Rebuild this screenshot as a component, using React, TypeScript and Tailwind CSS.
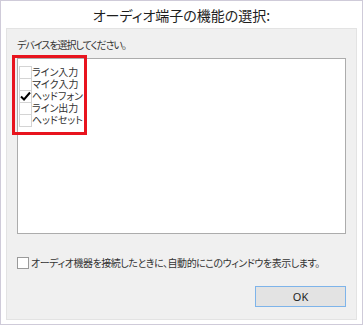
import React from "react";

const items = [
  { label: "ライン入力", checked: false },
  { label: "マイク入力", checked: false },
  { label: "ヘッドフォン", checked: true },
  { label: "ライン出力", checked: false },
  { label: "ヘッドセット", checked: false },
];

const font = "font-['Noto_Sans_CJK_JP','Noto_Sans',sans-serif] [font-feature-settings:'palt']";

const App: React.FC = () => {
  return (
    <div className={`w-[363px] h-[325px] bg-white border border-[#cfcbd9] flex flex-col ${font} text-[#1e1e1e]`}>
      <div className="h-[27px] flex items-center justify-center text-[14px] leading-none">
        オーディオ端子の機能の選択:
      </div>
      <div className="mx-[5px] mb-[4px] flex-1 bg-[#f0f0f0] border border-[#e3e3e3] px-[10px] flex flex-col">
        <p className="mt-[10px] text-[10px] leading-[12px] tracking-[-1px] text-[#333]">デバイスを選択してください。</p>
        <div className="relative mt-[7px] h-[176px] bg-white border border-[#acacac] pt-[7px]">
          {items.map((item) => (
            <div key={item.label} className="h-[12px] flex items-center">
              <div className="ml-[1px] w-[13px] h-[13px] border border-[#d4d4d4] bg-white flex items-center justify-center">
                {item.checked && (
                  <svg width="11" height="10" viewBox="0 0 11 10">
                    <path d="M1 5.5 L4 8.5 L10 1.5" stroke="#000" strokeWidth="2" fill="none" />
                  </svg>
                )}
              </div>
              <span className="text-[10px] leading-[12px] h-[12px] text-[#333]">{item.label}</span>
            </div>
          ))}
          <div className="absolute left-[-6px] top-[-4px] w-[75px] h-[80px] border-[3px] border-[#e8141e]" />
        </div>
        <div className="mt-[23px] flex items-center">
          <div className="w-[12px] h-[12px] border border-[#9a9a9a] bg-white" />
          <span className="ml-[2px] text-[10px] leading-[12px] tracking-[-0.45px] text-[#333]">
            オーディオ機器を接続したときに、自動的にこのウィンドウを表示します。
          </span>
        </div>
        <div className="mt-[17px] flex justify-end">
          <button className="w-[91px] h-[21px] border border-[#7eb4ea] bg-[#e3e3e3] text-[11px] leading-none text-[#1e1e1e] font-['Noto_Sans',sans-serif]">
            OK
          </button>
        </div>
      </div>
    </div>
  );
};

export default App;
